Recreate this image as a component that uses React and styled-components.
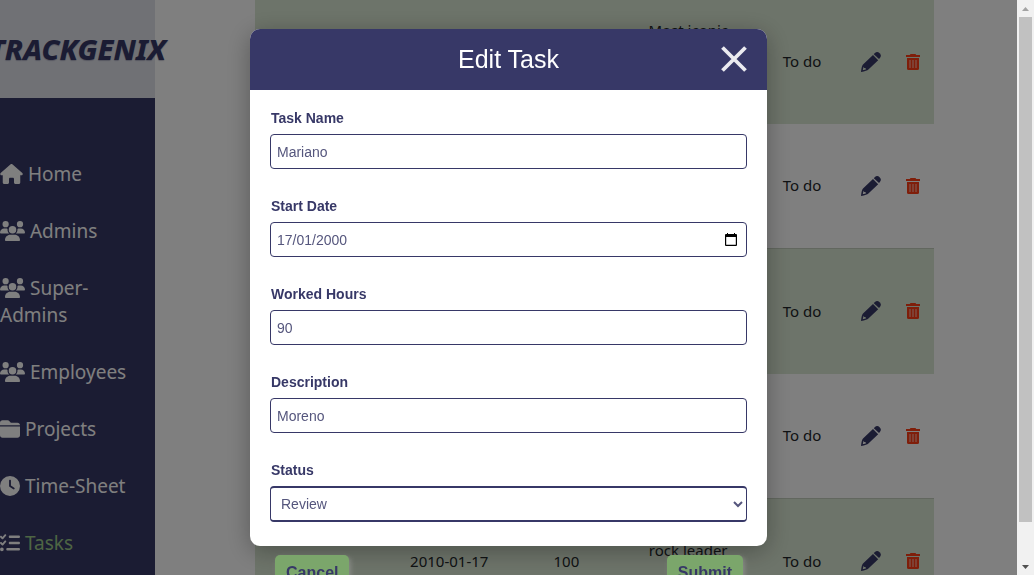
import React from "react";
import styled, { createGlobalStyle } from "styled-components";
import {
  FaHouse,
  FaUsers,
  FaFolderClosed,
  FaClock,
  FaListCheck,
} from "react-icons/fa6";

const navy = "#373867";
const uiFont = '"Noto Sans", "Open Sans", sans-serif';
const formFont = '"Liberation Sans", Arial, sans-serif';

const GlobalStyle = createGlobalStyle`
  * { box-sizing: border-box; }
  body { margin: 0; font-family: ${uiFont}; background: #fff; overflow: hidden; }
`;

const Page = styled.div`
  display: flex;
  height: 100vh;
  overflow: hidden;
`;

const Sidebar = styled.aside`
  flex: none;
  width: 15vw;
  background: ${navy};
`;

const Brand = styled.div`
  display: flex;
  justify-content: center;
  align-items: center;
  height: 98px;
  background: #e1e3eb;
  color: ${navy};
  font: italic 800 29px/38px ${uiFont};
  text-shadow: 0 1px 1px rgba(55, 56, 103, 0.3);
`;

const Nav = styled.nav`
  display: flex;
  flex-direction: column;
  gap: 30px;
  padding-top: 63px;
`;

const NavLink = styled.a`
  padding-right: 8px;
  color: ${(p) => (p.$active ? "#9cca88" : "#fff")};
  font-size: 19px;
  line-height: 27px;
  text-decoration: none;

  svg {
    width: ${(p) => p.$iconWidth}px;
    height: 20px;
    color: #fff;
    vertical-align: -3px;
  }
`;

const Main = styled.main`
  flex: 1;
  min-width: 0;
  padding: 0 100px;
`;

const Table = styled.table`
  width: 100%;
  table-layout: fixed;
  border-collapse: separate;
  border-spacing: 0;
`;

const Col = styled.col`
  width: ${(p) => p.$share}%;
`;

const Row = styled.tr`
  background: ${(p) => (p.$shaded ? "#dbe8d4" : "#fff")};
`;

const Cell = styled.td`
  height: ${(p) => (p.$ruled ? 126 : 124)}px;
  padding: 0 0 1px;
  border-top: ${(p) => (p.$ruled ? "1px solid #c4cfbe" : "0")};
  color: #212529;
  font-size: 15px;
  line-height: 21px;
  text-align: center;
  vertical-align: middle;
`;

const IconButton = styled.button`
  display: flex;
  margin: 0 auto;
  padding: 0;
  border: 0;
  background: none;
  color: ${(p) => p.$color};
`;

const Overlay = styled.div`
  position: fixed;
  inset: 0 17px 0 0;
  display: flex;
  justify-content: center;
  align-items: flex-start;
  padding-top: 29px;
  overflow: hidden;
  background: rgba(0, 0, 0, 0.5);
`;

const Form = styled.form`
  width: 50vw;
  font-family: ${formFont};
`;

const Card = styled.div`
  border-radius: 10px;
  background: #fff;
  box-shadow: 0 5px 25px rgba(0, 0, 0, 0.3);
  overflow: hidden;
`;

const CardHeader = styled.header`
  display: grid;
  grid-template-columns: 1fr auto 1fr;
  align-items: center;
  height: 61px;
  padding: 0 20px 2px;
  background: ${navy};
`;

const Title = styled.h2`
  grid-column: 2;
  margin: 0;
  color: #fff;
  font-size: 25px;
  font-weight: 400;
  line-height: 30px;
`;

const CloseButton = styled.button`
  justify-self: end;
  display: flex;
  padding: 0;
  border: 0;
  background: none;
  color: #ebebf0;
`;

const Fields = styled.div`
  display: flex;
  flex-direction: column;
  gap: 28px;
  padding: 19px 20px 24px;
`;

const Field = styled.div`
  display: flex;
  flex-direction: column;
  gap: 7px;
`;

const Label = styled.label`
  padding-left: 1px;
  color: ${navy};
  font-size: 14px;
  font-weight: 700;
  line-height: 18px;
`;

const Control = styled.div`
  display: flex;
  align-items: center;
  height: 35px;
  border: 1px solid ${navy};
  border-radius: 4px;
  background: #fff;
`;

const Input = styled.input`
  flex: 1;
  min-width: 0;
  height: 100%;
  padding: 1px 6px 0;
  border: 0;
  border-radius: 4px;
  outline: 0;
  background: transparent;
  color: #55567d;
  font: 14px/18px ${formFont};
`;

const PickerButton = styled.button`
  display: flex;
  padding: 0 9px;
  border: 0;
  background: none;
  color: #000;
`;

const Select = styled.select`
  width: 100%;
  height: 36px;
  padding: 0 0 0 6px;
  border: solid ${navy};
  border-width: 2px 1px;
  border-radius: 4px;
  outline: 0;
  background: #fff;
  color: #55567d;
  font: 14px/18px ${formFont};
`;

const Actions = styled.div`
  display: flex;
  justify-content: space-between;
  padding: 9px 24px 0 25px;
`;

const ActionButton = styled.button`
  height: 36px;
  padding: 0 11px;
  border: 0;
  border-radius: 5px;
  background: #7ba66b;
  box-shadow: 2px 2px 4px rgba(160, 160, 160, 0.5);
  color: ${navy};
  font: 700 16px/20px ${formFont};
`;

const Scrollbar = styled.div`
  position: fixed;
  inset: 0 0 0 auto;
  display: flex;
  flex-direction: column;
  align-items: center;
  width: 17px;
  background: #f1f1f1;
`;

const ScrollArrow = styled.svg`
  flex: none;
  width: 17px;
  height: 17px;
`;

const ScrollTrack = styled.div`
  flex: 1;
  width: 13px;
`;

const ScrollThumb = styled.div`
  height: 93.3%;
  background: #c1c1c1;
`;

const links = [
  ["Home", FaHouse, 23],
  ["Admins", FaUsers, 25],
  ["Super-Admins", FaUsers, 25],
  ["Employees", FaUsers, 25],
  ["Projects", FaFolderClosed, 20],
  ["Time-Sheet", FaClock, 20],
  ["Tasks", FaListCheck, 20],
];

const columnShares = [19.6, 18, 16.5, 19.4, 14.1, 6.2, 6.2];

const tasks = [1, 2, 3, 4, 5].map((id) => ({
  id,
  name: "Rock",
  date: "2010-01-17",
  hours: "100",
  status: "To do",
}));

const PencilIcon = () => (
  <svg width="20" height="20" viewBox="0 0 20 20" fill="currentColor" aria-hidden="true">
    <path d="M13.700 1.300q2.500-2.400 4.900 0t.3 4.800l-.9.900-5.200-4.800z" />
    <path
      fillRule="evenodd"
      d="M12 3l5.200 5.200L7.400 17.600Q6 19 0 20q.6-6 2-7.400zM2.600 14.800l-.9 3.400 3.200-.8-.4-1.300-1.300-.2z"
    />
  </svg>
);

const TrashIcon = () => (
  <svg width="14" height="16" viewBox="0 0 14 16" fill="currentColor" aria-hidden="true">
    <path d="M4.500 0h5l.7 1H14v2H0V1h3.800z" />
    <path
      fillRule="evenodd"
      d="M1 4h12v10.500q0 1.500-1.500 1.500h-9Q1 16 1 14.500z"
    />
    <path
      d="M4 6v8M7 6v8M10 6v8"
      stroke="#fff"
      strokeOpacity="0.35"
      strokeWidth="2"
    />
  </svg>
);

const CloseIcon = () => (
  <svg width="26" height="26" viewBox="0 0 26 26" aria-hidden="true">
    <path d="M1.500 1.500l23 23M24.500 1.500l-23 23" stroke="currentColor" strokeWidth="3.800" />
  </svg>
);

const CalendarIcon = () => (
  <svg width="12" height="13" viewBox="0 0 12 13" aria-hidden="true">
    <path
      fill="currentColor"
      fillRule="evenodd"
      d="M2 0h1v1h6V0h1v1h1q1 0 1 1v10q0 1-1 1H1q-1 0-1-1V2q0-1 1-1h1zM1.200 4v7.700h9.600V4z"
    />
  </svg>
);

function TextField({ id, label, value, children }) {
  return (
    <Field>
      <Label htmlFor={id}>{label}</Label>
      <Control>
        <Input id={id} type="text" defaultValue={value} />
        {children}
      </Control>
    </Field>
  );
}

export default function App() {
  return (
    <>
      <GlobalStyle />
      <Page>
        <Sidebar>
          <Brand>TRACKGENIX</Brand>
          <Nav>
            {links.map(([text, Icon, iconWidth]) => (
              <NavLink key={text} href="#" $active={text === "Tasks"} $iconWidth={iconWidth}>
                <Icon /> {text}
              </NavLink>
            ))}
          </Nav>
        </Sidebar>
        <Main>
          <Table>
            <colgroup>
              {columnShares.map((share, i) => (
                <Col key={i} $share={share} />
              ))}
            </colgroup>
            <tbody>
              {tasks.map((task, i) => {
                const shaded = i % 2 === 0;
                const ruled = shaded && i > 0;
                return (
                  <Row key={task.id} $shaded={shaded}>
                    <Cell $ruled={ruled}>{task.name}</Cell>
                    <Cell $ruled={ruled}>{task.date}</Cell>
                    <Cell $ruled={ruled}>{task.hours}</Cell>
                    <Cell $ruled={ruled}>
                      Most iconic
                      <br />
                      rock leader
                      <br />
                      of all
                      <br />
                      time
                    </Cell>
                    <Cell $ruled={ruled}>{task.status}</Cell>
                    <Cell $ruled={ruled}>
                      <IconButton $color={navy} aria-label="Edit task">
                        <PencilIcon />
                      </IconButton>
                    </Cell>
                    <Cell $ruled={ruled}>
                      <IconButton $color="#ff3c14" aria-label="Delete task">
                        <TrashIcon />
                      </IconButton>
                    </Cell>
                  </Row>
                );
              })}
            </tbody>
          </Table>
        </Main>
      </Page>
      <Overlay>
        <Form onSubmit={(e) => e.preventDefault()}>
          <Card>
            <CardHeader>
              <Title>Edit Task</Title>
              <CloseButton type="button" aria-label="Close">
                <CloseIcon />
              </CloseButton>
            </CardHeader>
            <Fields>
              <TextField id="name" label="Task Name" value="Mariano" />
              <TextField id="date" label="Start Date" value="17/01/2000">
                <PickerButton type="button" aria-label="Pick a date">
                  <CalendarIcon />
                </PickerButton>
              </TextField>
              <TextField id="hours" label="Worked Hours" value="90" />
              <TextField id="description" label="Description" value="Moreno" />
              <Field>
                <Label htmlFor="status">Status</Label>
                <Select id="status" defaultValue="Review">
                  <option>To do</option>
                  <option>Review</option>
                </Select>
              </Field>
            </Fields>
          </Card>
          <Actions>
            <ActionButton type="button">Cancel</ActionButton>
            <ActionButton type="submit">Submit</ActionButton>
          </Actions>
        </Form>
      </Overlay>
      <Scrollbar aria-hidden="true">
        <ScrollArrow viewBox="0 0 17 17">
          <path d="M5 11l3.500-4 3.500 4z" fill="#a3a3a3" />
        </ScrollArrow>
        <ScrollTrack>
          <ScrollThumb />
        </ScrollTrack>
        <ScrollArrow viewBox="0 0 17 17">
          <path d="M5 7l3.500 4L12 7z" fill="#505050" />
        </ScrollArrow>
      </Scrollbar>
    </>
  );
}
